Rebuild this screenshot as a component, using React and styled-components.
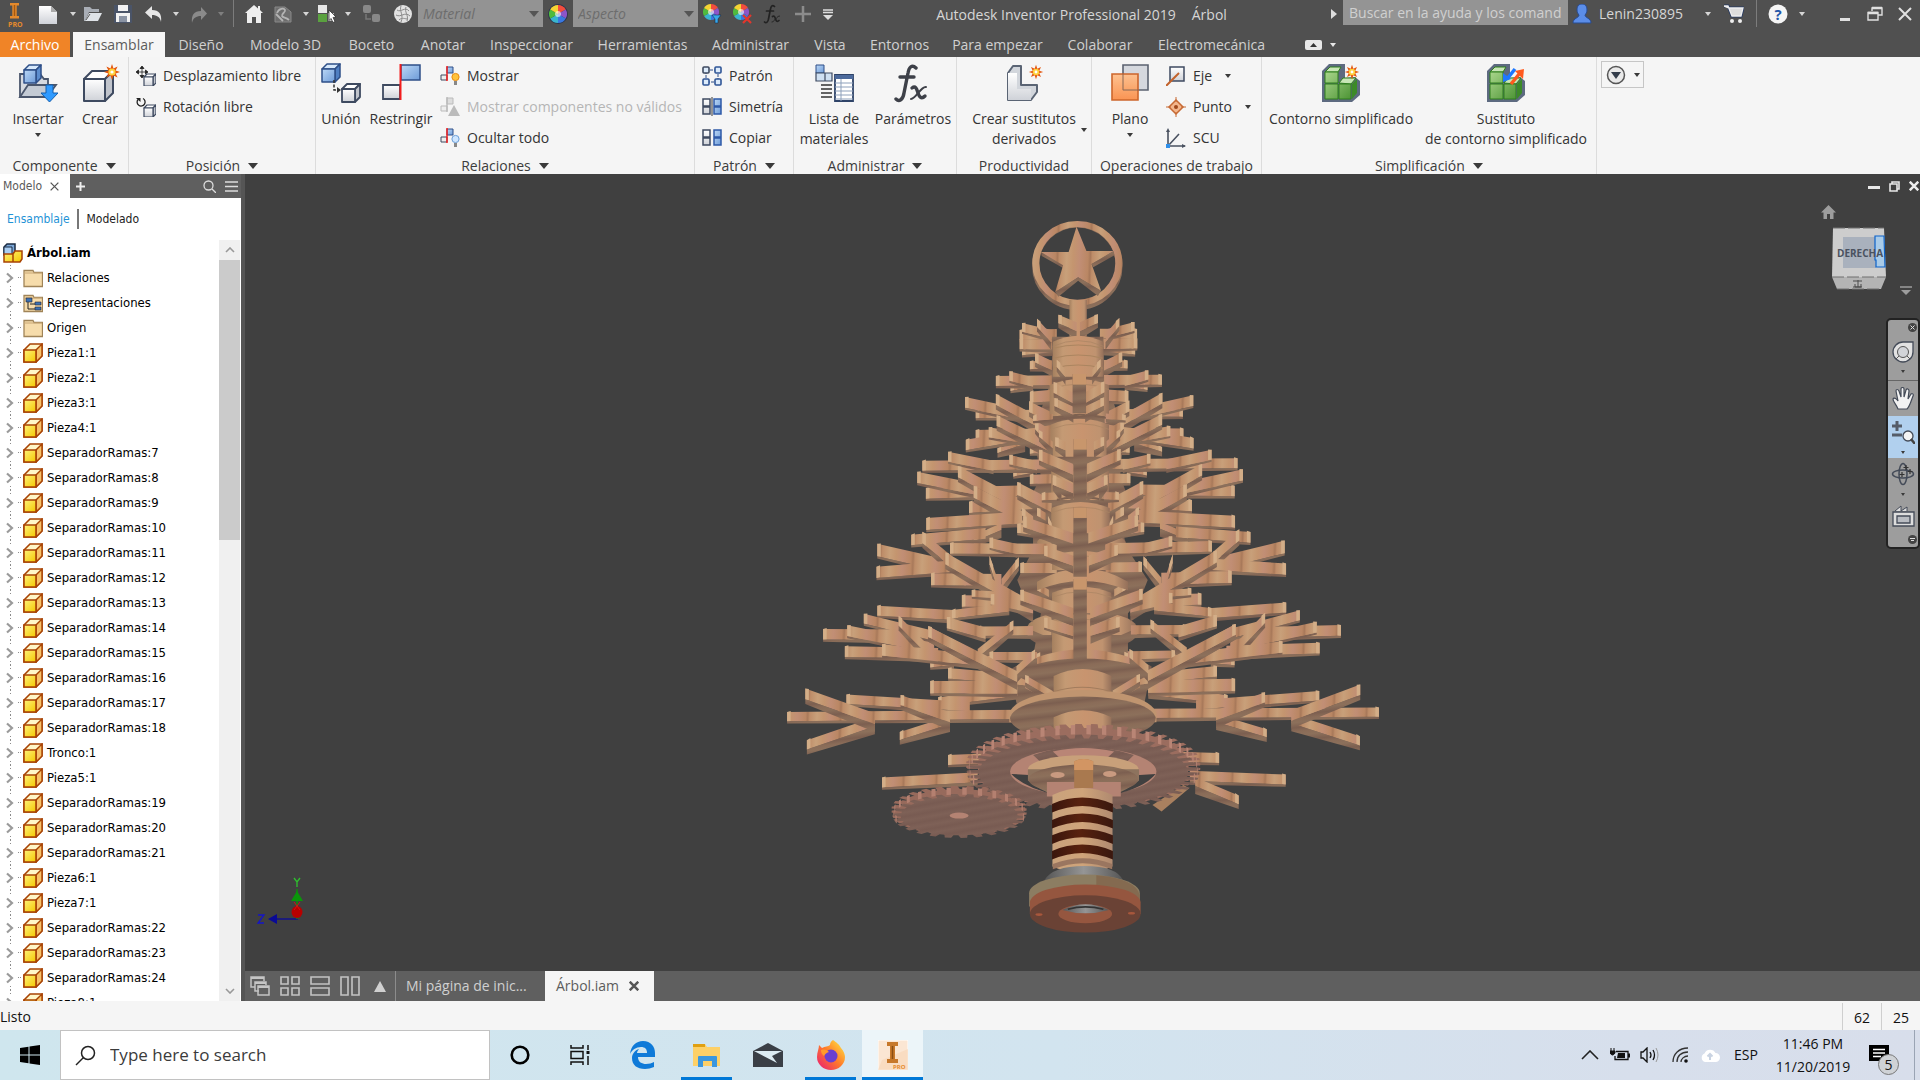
import React from "react";
import styled, { createGlobalStyle } from "styled-components";

const ui = `"Open Sans", "Noto Sans", sans-serif`;
const browserFont = `"DejaVu Sans Condensed", "Noto Sans", "Open Sans", sans-serif`;

const Global = createGlobalStyle`
  *, *::before, *::after { box-sizing: border-box; }
  body { margin: 0; overflow: hidden; font-family: ${ui}; font-size: 14px; line-height: 20px; color: #333; }
  button, input, select { font: inherit; color: inherit; }
  button { border: 0; padding: 0; background: none; }
  ul { list-style: none; margin: 0; padding: 0; }
  svg { display: block; flex: none; }
`;

/* ---------- shell ---------- */

const Window = styled.div`
  display: flex;
  flex-direction: column;
  height: 100vh;
  background: #f5f5f5;
`;

const TitleBar = styled.header`
  display: flex;
  align-items: flex-start;
  height: 32px;
  background: #505050;
  color: #d6d6d6;
`;

const ToolSlot = styled.button`
  display: flex;
  flex: none;
  align-items: center;
  justify-content: center;
  width: ${(p) => p.$w}px;
  height: 27px;
  opacity: ${(p) => (p.$dim ? 0.35 : 1)};
`;

const Rule = styled.span`
  flex: none;
  width: 1px;
  height: 27px;
  margin: 0 ${(p) => p.$gap}px;
  background: #7c7c7c;
`;

const Caret = styled.span`
  display: block;
  flex: none;
  width: 0;
  height: 0;
  border: ${(p) => p.$s || 3}px solid transparent;
  border-top-color: ${(p) => p.$c || "#3a3a3a"};
  border-top-width: ${(p) => (p.$s || 3) + 1}px;
  border-bottom: 0;
`;

const ComboWrap = styled.label`
  display: flex;
  position: relative;
  align-items: center;
  width: 125px;
  height: 27px;
  background: #939393;
`;

const Combo = styled.select`
  flex: 1;
  width: 100%;
  height: 27px;
  padding: 0 5px;
  border: 0;
  appearance: none;
  background: transparent;
  color: #6d6d6d;
  font-style: italic;
`;

const ComboCaret = styled(Caret)`
  position: absolute;
  right: 4px;
`;

const Title = styled.h1`
  display: flex;
  flex: 1;
  justify-content: center;
  gap: 16px;
  margin: 0;
  padding-top: 5px;
  font-size: 14px;
  font-weight: 400;
  line-height: 20px;
  white-space: nowrap;
`;

const HelpSearch = styled.input`
  width: 225px;
  height: 25px;
  padding: 0 6px;
  border: 0;
  background: #949494;
  &::placeholder { color: #d0d0d0; opacity: 1; }
`;

const UserName = styled.span`
  width: 104px;
  padding: 4px 0 0 3px;
`;

const WindowButtons = styled.div`
  display: flex;
  margin-left: 21px;
`;

const Tabs = styled.nav`
  display: flex;
  align-items: stretch;
  height: 25px;
  background: #505050;
`;

const Tab = styled.button`
  width: ${(p) => p.$w}px;
  margin-right: ${(p) => (p.$file ? 3 : 0)}px;
  background: ${(p) => (p.$file ? "#f08427" : p.$active ? "#f6f6f6" : "transparent")};
  color: ${(p) => (p.$file ? "#fff" : p.$active ? "#5c5c5c" : "#d0d0d0")};
  line-height: 24px;
  text-align: center;
  white-space: nowrap;
`;

const RibbonToggle = styled.button`
  display: flex;
  align-items: center;
  gap: 8px;
  margin-left: 28px;
`;

/* ---------- ribbon ---------- */

const Ribbon = styled.section`
  display: flex;
  height: 117px;
  background: #f5f5f5;
`;

const Group = styled.div`
  display: flex;
  flex: none;
  flex-direction: column;
  width: ${(p) => p.$w}px;
  border-right: 1px solid #dcdcdc;
`;

const GroupBody = styled.div`
  display: flex;
  flex: 1;
  padding-left: ${(p) => p.$pad || 0}px;
`;

const GroupName = styled.div`
  display: flex;
  align-items: center;
  justify-content: center;
  gap: 8px;
  height: 20px;
  margin-bottom: -2px;
  color: #3c3c3c;
  white-space: nowrap;
`;

const BigButton = styled.button`
  display: flex;
  flex: none;
  flex-direction: column;
  align-items: center;
  width: ${(p) => p.$w}px;
  padding-top: 6px;
  white-space: pre;
  svg { margin-bottom: 6px; }
  ${Caret} { margin-top: 4px; }
`;

const SplitButton = styled.div`
  display: flex;
  align-items: flex-end;
  height: 79px;
  ${Caret} { margin-bottom: 4px; }
`;

const Stack = styled.div`
  display: flex;
  flex-direction: column;
  padding: 3px 0 0 ${(p) => p.$pad || 0}px;
`;

const SmallButton = styled.button`
  display: flex;
  align-items: center;
  gap: 7px;
  height: 31px;
  color: ${(p) => (p.disabled ? "#b5b5b5" : "#333")};
  white-space: nowrap;
  ${Caret} { margin-left: 6px; }
`;

const PanelMenu = styled.button`
  display: flex;
  align-items: center;
  justify-content: center;
  gap: 8px;
  width: 43px;
  height: 27px;
  margin: 4px;
  border: 1px solid #c6c6c6;
`;

/* ---------- browser panel ---------- */

const Main = styled.main`
  display: flex;
  flex: 1;
  min-height: 0;
`;

const Browser = styled.aside`
  display: flex;
  flex: none;
  flex-direction: column;
  width: 245px;
  border-right: 4px solid #555;
  background: #fff;
  color: #000;
  font-family: ${browserFont};
  font-size: 13px;
`;

const BrowserTabs = styled.div`
  display: flex;
  align-items: center;
  height: 24px;
  background: #5f5f5f;
`;

const BrowserTab = styled.button`
  display: flex;
  align-items: center;
  gap: 8px;
  width: 70px;
  height: 24px;
  padding-left: 3px;
  background: #fff;
  color: #5a5a5a;
  font-size: 12px;
`;

const IconButton = styled.button`
  display: flex;
  align-items: center;
  justify-content: center;
  width: ${(p) => (p.$push ? 24 : 20)}px;
  height: 24px;
  margin-left: ${(p) => (p.$push ? "auto" : "0")};
`;

const Modes = styled.div`
  display: flex;
  align-items: center;
  height: 42px;
  padding-left: 7px;
`;

const Mode = styled.button`
  padding: 0 7px 0 0;
  color: ${(p) => (p.$active ? "#1f93d6" : "#222")};
  font-size: 12px;
  & + & { padding-left: 8px; border-left: 2px solid #777; }
`;

const TreeArea = styled.div`
  display: flex;
  flex: 1;
  min-height: 0;
`;

const Tree = styled.ul`
  flex: 1;
  overflow: hidden;
`;

const RootRow = styled.li`
  display: flex;
  align-items: center;
  gap: 4px;
  height: 25px;
  padding-left: 3px;
  font-weight: 700;
`;

const Row = styled.li`
  display: flex;
  align-items: center;
  height: 25px;
  background: repeating-linear-gradient(#8c8c8c 0 1px, transparent 1px 3px) 10px 0 / 1px 100% no-repeat;
`;

const Expander = styled.button`
  display: flex;
  flex: none;
  align-items: center;
  justify-content: flex-end;
  width: 14px;
  height: 15px;
  margin-right: 4px;
  background: #fff;
`;

const Dash = styled.span`
  flex: none;
  width: 3px;
  margin-right: 2px;
  border-top: 1px dotted #8c8c8c;
`;

const RowText = styled.span`
  margin-left: 4px;
`;

const ScrollBar = styled.div`
  display: flex;
  flex-direction: column;
  justify-content: space-between;
  width: 21px;
  margin-right: 1px;
  background: #f0f0f0;
`;

const ScrollThumb = styled.div`
  height: 280px;
  margin-bottom: auto;
  background: #cbcbcb;
`;

const ScrollArrow = styled.button`
  display: flex;
  flex: none;
  align-items: center;
  justify-content: center;
  height: 20px;
`;

/* ---------- canvas ---------- */

const Work = styled.section`
  display: flex;
  flex: 1;
  flex-direction: column;
  min-width: 0;
`;

const Canvas = styled.div`
  display: flex;
  flex: 1;
  position: relative;
  align-items: flex-start;
  justify-content: center;
  min-height: 0;
  padding-top: 41px;
  background: #404040;
`;

const Overlay = styled.div`
  position: absolute;
  top: ${(p) => p.$top}px;
  right: ${(p) => p.$right}px;
`;

const AxisMark = styled.div`
  position: absolute;
  left: 10px;
  bottom: 45px;
`;

const DocButtons = styled(Overlay)`
  display: flex;
  align-items: center;
  gap: 9px;
`;

const NavBar = styled.div`
  display: flex;
  position: absolute;
  top: 144px;
  right: 0;
  flex-direction: column;
  align-items: stretch;
  width: 34px;
  height: 231px;
  border: 2px solid #222;
  border-radius: 5px;
  background: #9d9d9d;
`;

const NavButton = styled.button`
  display: flex;
  flex-direction: column;
  align-items: ${(p) => (p.$corner ? "flex-end" : "center")};
  justify-content: center;
  gap: 7px;
  height: ${(p) => p.$h}px;
  margin-right: ${(p) => (p.$corner ? 1 : 0)}px;
  border-bottom: ${(p) => (p.$line ? "1px solid #666" : "0")};
  background: ${(p) => (p.$on ? "#b1d0ee" : "transparent")};
`;

const DocBar = styled.div`
  display: flex;
  flex: none;
  align-items: center;
  height: 30px;
  background: #5f5f5f;
`;

const LayoutButton = styled.button`
  display: flex;
  justify-content: center;
  width: 30px;
`;

const DocTab = styled.button`
  display: flex;
  align-items: center;
  gap: 10px;
  width: ${(p) => p.$w}px;
  height: 30px;
  padding: 0 10px;
  border-left: 1px solid ${(p) => (p.$active ? "#f5f5f5" : "#8c8c8c")};
  background: ${(p) => (p.$active ? "#f5f5f5" : "transparent")};
  color: ${(p) => (p.$active ? "#5c5c5c" : "#d0d0d0")};
  white-space: nowrap;
`;

const StatusBar = styled.footer`
  display: flex;
  flex: none;
  height: 29px;
  line-height: 32px;
  color: #111;
`;

const StatusText = styled.span`
  flex: 1;
`;

const StatusCell = styled.span`
  width: 39px;
  margin-top: 2px;
  border-left: 1px solid #cfcfcf;
  line-height: 29px;
  text-align: center;
`;

/* ---------- task bar ---------- */

const TaskBar = styled.div`
  display: flex;
  flex: none;
  height: 50px;
  background: linear-gradient(90deg, #cfe6ee, #d2e4ef 55%, #d7dfec 85%, #d8deeb);
  color: #111;
`;

const TaskButton = styled.button`
  display: flex;
  flex: none;
  align-items: center;
  justify-content: center;
  width: ${(p) => p.$w}px;
  margin-right: ${(p) => p.$after || 0}px;
  border-top: 3px solid transparent;
  border-bottom: 3px solid ${(p) => (p.$open ? "#0078d7" : "transparent")};
  background: ${(p) => (p.$active ? "#ecf5f9" : "transparent")};
`;

const TaskSearch = styled.label`
  display: flex;
  align-items: center;
  gap: 12px;
  width: 430px;
  margin-right: 6px;
  padding-left: 14px;
  border: 1px solid #c2c2c2;
  background: #fff;
`;

const TaskInput = styled.input`
  flex: 1;
  min-width: 0;
  border: 0;
  font-size: 17px;
  line-height: 24px;
  &::placeholder { color: #3b3b3b; opacity: 1; }
`;

const Tray = styled.div`
  display: flex;
  align-items: center;
  margin-left: auto;
`;

const TrayItem = styled.button`
  display: flex;
  align-items: center;
  justify-content: center;
  width: ${(p) => p.$w || 30}px;
`;

const Clock = styled.time`
  width: 92px;
  line-height: 23px;
  text-align: center;
`;

const Notice = styled.button`
  display: flex;
  position: relative;
  align-items: flex-start;
  width: 34px;
  height: 50px;
  margin: 0 15px 0 6px;
  padding: 15px 0 0 4px;
`;

const Badge = styled.span`
  position: absolute;
  left: 13px;
  bottom: 5px;
  width: 21px;
  height: 21px;
  border: 1px solid #777;
  border-radius: 50%;
  background: #cfd2d6;
  line-height: 19px;
  text-align: center;
`;

const ShowDesktop = styled.span`
  width: 6px;
  height: 50px;
  border-left: 1px solid #9aa4b4;
`;

/* ---------- icons ---------- */

const Svg = ({ w = 20, h = w, vb, children, ...r }) => (
  <svg width={w} height={h} viewBox={vb || `0 0 ${w} ${h}`} fill="none" aria-hidden="true" {...r}>{children}</svg>
);

const HiddenSvg = styled.svg`
  position: absolute;
`;

const Defs = () => (
  <HiddenSvg width="0" height="0" aria-hidden="true">
    <defs>
      <linearGradient id="blue" x2="1" y2="1"><stop stopColor="#bcd8f6" /><stop offset="1" stopColor="#6d9bd8" /></linearGradient>
      <linearGradient id="grey" x2="0" y2="1"><stop stopColor="#fff" /><stop offset="1" stopColor="#cfd2d8" /></linearGradient>
      <linearGradient id="green" x2="1" y2="1"><stop stopColor="#a9d68b" /><stop offset="1" stopColor="#4d9435" /></linearGradient>
      <linearGradient id="orange" x2="0" y2="1"><stop stopColor="#ffc08c" /><stop offset="1" stopColor="#fb8f4b" /></linearGradient>
      <linearGradient id="yellow" x2="1" y2="1"><stop stopColor="#fff27a" /><stop offset="1" stopColor="#f3c800" /></linearGradient>
      <linearGradient id="fox" x1="1" x2="0" y2="1"><stop stopColor="#fff044" /><stop offset=".5" stopColor="#ff7a2a" /><stop offset="1" stopColor="#e8157a" /></linearGradient>
      <linearGradient id="wood" gradientUnits="userSpaceOnUse" x1="0" y1="0" x2="83" y2="3" spreadMethod="repeat">
        <stop stopColor="#c4956f" /><stop offset=".2" stopColor="#c18e75" /><stop offset=".45" stopColor="#ba8764" /><stop offset=".52" stopColor="#a8795a" /><stop offset=".58" stopColor="#be8d69" /><stop offset=".8" stopColor="#c8a07a" /><stop offset="1" stopColor="#c4956f" />
      </linearGradient>
      <linearGradient id="drum"><stop stopColor="#a5805f" /><stop offset=".2" stopColor="#c49a74" /><stop offset=".55" stopColor="#c8946f" /><stop offset=".85" stopColor="#bf9370" /><stop offset="1" stopColor="#94705a" /></linearGradient>
      <linearGradient id="under" gradientUnits="userSpaceOnUse" x1="0" y1="0" x2="5" y2="38" spreadMethod="repeat">
        <stop stopColor="#8c705b" /><stop offset=".4" stopColor="#7c5f50" /><stop offset=".7" stopColor="#8a6c58" /><stop offset="1" stopColor="#8c705b" />
      </linearGradient>
      <linearGradient id="face" gradientUnits="userSpaceOnUse" x1="0" y1="0" x2="5" y2="24" spreadMethod="repeat">
        <stop stopColor="#7e6157" /><stop offset=".5" stopColor="#785b52" /><stop offset="1" stopColor="#7e6157" />
      </linearGradient>
      <linearGradient id="spool"><stop stopColor="#c9a27c" /><stop offset=".5" stopColor="#cfa47a" /><stop offset="1" stopColor="#b08a70" /></linearGradient>
      <linearGradient id="coil"><stop stopColor="#3a160d" /><stop offset=".45" stopColor="#58220f" /><stop offset="1" stopColor="#3a180f" /></linearGradient>
      <linearGradient id="steel"><stop stopColor="#555" /><stop offset=".5" stopColor="#959595" /><stop offset="1" stopColor="#555" /></linearGradient>
    </defs>
  </HiddenSvg>
);

const Spark = ({ x, y, s = 1 }) => (
  <g transform={`translate(${x} ${y}) scale(${s})`}>
    <path d="M0-8 1.5-3.6 5.6-5.6 3.6-1.5 8 0 3.6 1.5 5.6 5.6 1.5 3.6 0 8-1.5 3.6-5.6 5.6-3.6 1.5-8 0-3.6-1.5-5.6-5.6-1.5-3.6Z" fill="#e4550c" />
    <circle r="3.6" fill="#ffd23c" /><circle r="1.6" fill="#fff" />
  </g>
);

const Box = ({ x, y, w, h, d = 5, fill = "url(#grey)", top = "#fff", side = "#c0c4cc", stroke = "#3e4a60", sw = 1.5 }) => (
  <g transform={`translate(${x} ${y})`} stroke={stroke} strokeWidth={sw} strokeLinejoin="round">
    <path d={`M0 ${d} ${d} 0H${w}L${w - d} ${d}Z`} fill={top} />
    <path d={`M${w - d} ${d} ${w} 0V${h - d}L${w - d} ${h}Z`} fill={side} />
    <path d={`M0 ${d}H${w - d}V${h}H0Z`} fill={fill} />
  </g>
);

const IconPro = () => (
  <Svg w={20} h={27}><path d="M5 3h9v2.600h-2.300V16H14v2.600H5V16h2.300V5.600H5Z" fill="#e58a2c" /><path d="M9.500 5v11" stroke="#a8590f" strokeWidth="1.500" /><text x="3" y="26.500" fontSize="7" fontWeight="700" fontFamily="Open Sans, sans-serif" fill="#e58a2c">PRO</text></Svg>
);
const IconNew = () => <Svg><path d="M1 2h12l6 6v12H1Z" fill="url(#grey)" /><path d="M13 2v6h6Z" fill="#aaa" /></Svg>;
const IconOpen = () => <Svg><path d="M1 3h6l2 2h7v3H6L2 17H1Z" fill="#a9aeb6" /><path d="M6 9h13l-4 8H2Z" fill="#dfe3e8" /><path d="m3 16 4-6" stroke="#555" /></Svg>;
const IconSave = () => <Svg><path d="M1 1h18v18H1Z" fill="#4a5468" /><path d="M5 1h10v6H5ZM3 9h14v9H3Z" fill="#f2f2f2" /><path d="M6 12h8v6H6Z" fill="#8a93a3" /></Svg>;
const IconUndo = () => <Svg><path d="M8 2v4c7 0 10 4 9 12-1-5-4-7-9-7v4L1 8.500Z" fill="#e6e6e6" /></Svg>;
const IconRedo = () => <Svg w={18}><path d="M11 2v4C4 6 1 10 2 18c1-5 4-7 9-7v4l6-6.500Z" fill="#8a8a8a" /></Svg>;
const IconHome = () => <Svg><path d="M10 1 1 9h2v10h5v-6h4v6h5V9h2l-3-3V2h-2v2.500Z" fill="#eee" /></Svg>;
const IconSketch = () => <Svg><path d="M2 3h10l6 5v10H2Z" fill="#6e6e6e" stroke="#888" /><path d="M4 9c2-5 7-5 8-3s-4 4-3 6 4 1 7 4M3 10l7 7" stroke="#b4b4b4" strokeWidth="1.800" /></Svg>;
const IconSelect = () => <Svg><path d="M1 1h9v8H1Z" fill="#e7e7e7" /><path d="M1 10h9v8H1Z" fill="#5aa13f" /><path d="M11 9h6v8h-6Z" fill="#bbb" /><path d="m12 6 7 7-3 .5 2 4-2 1-2-4-2 2Z" fill="#fff" stroke="#333" strokeWidth=".8" /></Svg>;
const IconAdjust = () => <Svg><rect x="2" y="1" width="8" height="8" rx="2" fill="#888" /><rect x="11" y="10" width="8" height="8" rx="2" fill="#888" /><path d="M5 10v5h5" stroke="#777" strokeWidth="1.500" /></Svg>;
const IconGlobe = () => <Svg><circle cx="10" cy="10" r="9" fill="#e2e2e2" /><path d="M4 6c4 3 8-4 12 1M3 11c5 3 9-4 14 1M6 16c3-3 6-1 9-1M8 2c-2 5 3 9 0 16M13 3c-2 5 3 8 1 14" stroke="#8a8a8a" /></Svg>;
const Wheel = ({ r = 9 }) => (
  <g>
    {["#f24d3d", "#8d55c9", "#3978e0", "#3ab5cf", "#4fbb3d", "#f5d433"].map((c, i) => {
      const a = (i * 60 - 90) * Math.PI / 180, b = a + Math.PI / 3;
      return <path key={c} d={`M10 10L${10 + r * Math.cos(a)} ${10 + r * Math.sin(a)}A${r} ${r} 0 0 1 ${10 + r * Math.cos(b)} ${10 + r * Math.sin(b)}Z`} fill={c} />;
    })}
    <circle cx="10" cy="10" r="3" fill="#fff" opacity=".6" />
  </g>
);
const IconWheel = () => <Svg><circle cx="10" cy="10" r="10" fill="#2b344c" /><Wheel /></Svg>;
const IconWheelFilter = () => <Svg><g transform="translate(-1 -2)"><Wheel r={8} /></g><path d="M10 11h9l-3 4v4h-3v-4Z" fill="#38a8e8" stroke="#124" strokeWidth=".5" /></Svg>;
const IconWheelX = () => <Svg><g transform="translate(-1 -2)"><Wheel r={8} /></g><path d="m11 11 8 8m0-8-8 8" stroke="#e3362c" strokeWidth="2.200" /></Svg>;
const IconFx = ({ s = 20, c = "#222" }) => (
  <Svg w={s} h={s} vb="0 0 40 40"><path d="M23 5c-4-4-7-1-8 5l-4 20c-1 7-5 9-8 6M7 14h14" stroke={c} strokeWidth="3.400" strokeLinecap="round" /><path d="M19 25c4-3 5 2 6 5s3 7 7 3" stroke={c} strokeWidth="3.400" strokeLinecap="round" /><path d="M33 24c-5-1-10 12-15 12" stroke={c} strokeWidth="2" strokeLinecap="round" /></Svg>
);
const IconPlus = () => <Svg><path d="M10 2v16M2 10h16" stroke="#8c8c8c" strokeWidth="2.500" /></Svg>;
const IconMenuDown = () => <Svg w={12} h={12}><path d="M1 2h10M1 4.500h10" stroke="#ddd" strokeWidth="1.300" /><path d="M1 7h10l-5 5Z" fill="#ddd" /></Svg>;
const IconUser = () => <Svg w={20} h={20}><path d="M10 0c4 0 5 3 5 6 0 2-1 4-2 5 0 3 6 3 6 8H1c0-5 6-5 6-8-1-1-2-3-2-5 0-3 1-6 5-6Z" fill="#5b8de8" stroke="#274a90" /></Svg>;
const IconCart = () => <Svg><path d="M0 2h4l4 10h9l2-8H5" stroke="#273a63" strokeWidth="3" /><path d="M0 2h4l4 10h9l2-8H5Z" fill="#ddd" stroke="#eee" strokeWidth="1.300" /><circle cx="8" cy="17" r="2" fill="#eee" /><circle cx="16" cy="17" r="2" fill="#eee" /></Svg>;
const IconHelp = () => <Svg><circle cx="10" cy="10" r="9.500" fill="#f5f5f5" /><text x="10" y="15.500" textAnchor="middle" fontSize="15" fontWeight="700" fontFamily="Open Sans, sans-serif" fill="#2456a8">?</text></Svg>;
const IconMin = () => <Svg w={12} h={16}><path d="M1 12h10v3H1Z" fill="#e0e0e0" /></Svg>;
const IconRestore = () => <Svg w={16} h={16}><path d="M5 5V2h10v7h-4M1 6.500h10V14H1Z" stroke="#e0e0e0" strokeWidth="1.400" /><path d="M5 2h10M1 7h10" stroke="#e0e0e0" strokeWidth="2.500" /></Svg>;
const IconClose = ({ s = 14, c = "#e0e0e0", w = 2 }) => <Svg w={s} h={s} vb="0 0 14 14"><path d="m1 1 12 12M13 1 1 13" stroke={c} strokeWidth={w} /></Svg>;

const IconInsert = () => (
  <Svg w={40}><path d="M2 11h20l4 5h4v6L26 34H2Z" fill="#d5d9e0" stroke="#4a566c" strokeWidth="1.800" /><path d="M10 22h28l-9 12H2Z" fill="#c3cad4" stroke="#4a566c" strokeWidth="1.800" /><Box x={6} y={2} w={17} h={18} fill="url(#blue)" top="#d6e8fb" side="#5c8dce" stroke="#2e4f88" /><path d="M28 22h7v8h5l-8.500 9L23 30h5Z" fill="#2f9aff" stroke="#155fae" /></Svg>
);
const IconCreate = () => <Svg w={40}><Box x={4} y={8} w={29} h={30} d={8} sw={2} /><Spark x={32} y={9} /></Svg>;
const IconMove = () => <Svg><path d="M6 0 4 2.500h4ZM6 12 4 9.500h4ZM0 6l2.500-2v4ZM12 6 9.500 4v4ZM6 2v8M2 6h8" fill="#222" stroke="#222" strokeWidth=".8" /><Box x={8} y={8} w={12} h={12} d={3} sw={1.200} /></Svg>;
const IconRotate = () => <Svg><path d="M7 1.500A4 4 0 1 1 2 2.500" stroke="#222" strokeWidth="1.300" /><path d="M0 1h4.500v4Z" fill="#222" /><Box x={8} y={8} w={12} h={12} d={3} sw={1.200} /></Svg>;
const IconJoint = () => <Svg w={40}><Box x={1} y={1} w={18} h={18} fill="url(#blue)" top="#d6e8fb" side="#4f7fc2" stroke="#2e4f88" /><Box x={21} y={21} w={18} h={18} sw={1.800} /><path d="M13 17v10h4" stroke="#333" strokeWidth="1.500" strokeDasharray="3 1.500" /><path d="m16 24 4 3-4 3Z" fill="#333" /></Svg>;
const IconConstrain = () => <Svg w={40}><path d="M20 2h19v15H20Z" fill="url(#blue)" stroke="#2e4f88" strokeWidth="1.500" /><path d="M2 22h17v14H2Z" fill="url(#grey)" stroke="#3e4a60" strokeWidth="1.800" /><path d="M19.500 1v36" stroke="#f21d1d" strokeWidth="2" /></Svg>;
const IconRel = ({ bulb }) => {
  const off = bulb === "off";
  return (
    <Svg><path d="M7 1h6v6H7Z" fill={off ? "#ddd" : "url(#blue)"} stroke={off ? "#bbb" : "#2e4f88"} /><path d="M1 9h6v5H1Z" fill="#eee" stroke={off ? "#bbb" : "#3e4a60"} /><path d="M7 0v15" stroke={off ? "#bbb" : "#f21d1d"} strokeWidth="1.500" />
      {off ? <path d="m14 8 6 11H8Z" fill="#bbb" /> : <g><circle cx="15.500" cy="11" r="3.600" fill={bulb === "on" ? "#ffc23c" : "#cfe6ff"} stroke={bulb === "on" ? "#e88a10" : "#6a9ed8"} /><path d="M14 15h3v4h-3Z" fill="#888" /></g>}
    </Svg>
  );
};
const IconPattern = () => <Svg><path d="M4 4h12v12H4Z" stroke="#2e4f88" strokeDasharray="3 1" /><g fill="#dcebfb" stroke="#2f5596" strokeWidth="1.600"><rect x="1" y="1" width="6" height="6" rx="1" stroke="#3e4a60" /><rect x="13" y="1" width="6" height="6" rx="1" /><rect x="1" y="13" width="6" height="6" rx="1" /><rect x="13" y="13" width="6" height="6" rx="1" /></g></Svg>;
const IconMirror = ({ copy }) => <Svg><path d="M1 2h7v7H1ZM1 10h7v7H1Z" fill="url(#grey)" stroke="#3e4a60" strokeWidth="1.500" /><path d="M12 2h7v7h-7ZM12 10h7v7h-7Z" fill="url(#blue)" stroke="#2e5aa8" strokeWidth="1.500" />{!copy && <path d="M10 0v19" stroke="#333" />}</Svg>;
const IconBom = () => (
  <Svg w={40}><path d="M2 2h8v8H2Z" fill="url(#blue)" stroke="#2e4f88" /><path d="M2 10h9v8H2ZM11 10h7v8h-7Z" fill="#cfe0f2" stroke="#3e4a60" strokeWidth="1.200" /><path d="M7 22h11M7 26h11M7 30h11M7 34h11" stroke="#333" strokeWidth="1.500" /><path d="M21 12h18v26H21Z" fill="#fff" stroke="#2e4368" strokeWidth="1.800" /><path d="M21 12h18v4H21Z" fill="#4c6a9c" /><path d="M21 20h18M21 24h18M21 28h18M21 32h18M21 36h18M27 16v22" stroke="#8da0bb" /></Svg>
);
const IconDerive = () => <Svg w={40}><path d="m4 10 5-7h8v19h16v7l-6 8H4Z" fill="#d2d6dc" stroke="#5a6474" strokeWidth="2" strokeLinejoin="round" /><path d="M4 10h9v16h14v11H4Z" fill="url(#grey)" /><Spark x={32} y={9} s={0.900} /></Svg>;
const IconPlane = () => <Svg w={40}><path d="M13 2h25v25H13Z" fill="#d5d8de" stroke="#5b6270" strokeWidth="1.600" /><path d="M2 11h26v26H2Z" fill="url(#orange)" stroke="#cc5f22" strokeWidth="1.600" opacity=".95" /><path d="M13 11v16h15" stroke="#8a6a58" /></Svg>;
const IconAxis = () => <Svg><path d="M4 1h14v14H4Z" fill="url(#grey)" stroke="#3e4a60" strokeWidth="1.500" /><path d="M0 20 13 7" stroke="#c2622c" strokeWidth="2" /></Svg>;
const IconPoint = () => <Svg><path d="m10 3 7 7-7 7-7-7Z" fill="#f3b68c" stroke="#c76a34" strokeWidth="1.500" /><path d="M10 0v5M10 15v5M0 10h5M15 10h5" stroke="#c76a34" /><circle cx="10" cy="10" r="2" fill="#a0481c" /></Svg>;
const IconUcs = () => <Svg><path d="M2 2v16h17M2 18 13 6" stroke="#4a5260" strokeWidth="1.600" /><path d="M0 16h4v4H0Z" fill="#2f8fe8" /><path d="M0 4 2 0l2 4ZM16 16l4 2-4 2Z" fill="#4a5260" /></Svg>;
const IconShrink = ({ swap }) => (
  <Svg w={40}><path d="m1 8 7-7h16v14l10-1 5 4v14l-8 7H1Z" fill="#5d6a80" /><path d="m4 9 5-5h11l-3 5ZM18 20l4-5h13l-5 6Z" fill="#c8e6b6" stroke="#2f7f1c" /><path d="M4 9h13v11H4ZM4 21h13v15H4ZM18 21h12v15H18Z" fill="url(#green)" stroke="#2f7f1c" /><path d="m31 21 5-5v14l-5 6Z" fill="#3c8a28" />
    {swap ? <g strokeWidth="3.500"><path d="m29 6-8 10" stroke="#1e78ff" /><path d="M17 10v9l8-3Z" fill="#1e78ff" /><path d="m25 21 9-11" stroke="#ff5a1e" /><path d="m29 8 9-2-1 10Z" fill="#ff5a1e" /></g> : <Spark x={31} y={9} s={0.900} />}
  </Svg>
);

const IconPart = () => <Svg><path d="M1 7 7 1h12v12l-6 6H1Z" fill="#fff6c8" stroke="#a84304" strokeWidth="1.600" /><path d="M13 7l6-6v12l-6 6Z" fill="#f7c36a" stroke="#a84304" strokeWidth="1.400" /><path d="M1 7h12v12H1Z" fill="url(#yellow)" stroke="#a84304" strokeWidth="1.600" /></Svg>;
const IconFolder = ({ rep }) => <Svg><path d="M1 2.500h9l1 2h8.500v14H1Z" fill="#f6dcab" stroke="#a08458" strokeWidth="1.300" /><path d="M1 5h18" stroke="#c7a676" />{rep && <g><path d="M5 8v8h8M7 11h6" stroke="#222" /><path d="M3 5h6v4H3ZM12 9h6v3h-6ZM12 14h6v3h-6Z" fill="#3c72b4" stroke="#223" strokeWidth=".6" /></g>}</Svg>;
const IconAssembly = () => <Svg><path d="M1 4 4 1h8v8l-3 3H1Z" fill="#7ba7d8" stroke="#1b2c44" strokeWidth="1.500" /><path d="M1 4h8v8H1Z" fill="#a9cdf2" stroke="#1b2c44" /><path d="M1 11h9v8H1ZM10 11l2-3h7v8l-2 3h-7Z" fill="url(#yellow)" stroke="#a84304" strokeWidth="1.500" /></Svg>;

/* ---------- the assembly ---------- */

const backBeams = [
  [606, 405, 700, 402, 30], [612, 382, 690, 404, 26], [612, 458, 700, 448, 16], [606, 433, 700, 433, 30], [650, 368, 686, 415, 24],
  [704, 357, 750, 380, 26], [632, 496, 710, 492, 24], [645, 473, 730, 520, 28],
  [583, 567, 640, 555, 12], [546, 543, 700, 541, 30], [580, 528, 640, 546, 28],
  [632, 592, 700, 585, 34], [495, 644, 650, 640, 22], [468, 607, 620, 645, 32], [546, 598, 690, 690, 32], [630, 620, 700, 660, 32],
  [495, 705, 680, 700, 30], [550, 752, 620, 725, 14], [470, 735, 690, 690, 32], [528, 697, 660, 722, 30], [632, 745, 700, 740, 32], [548, 662, 700, 748, 32], [645, 670, 690, 730, 34],
  [590, 824, 640, 812, 12], [360, 797, 700, 793, 30], [425, 770, 540, 797, 30], [580, 779, 650, 797, 28], [632, 838, 700, 836, 28],
  [369, 880, 610, 872, 32], [347, 832, 490, 866, 34], [450, 815, 610, 915, 34], [478, 922, 640, 910, 34], [490, 875, 640, 968, 36], [600, 865, 690, 920, 38],
];
const midBeams = [
  [370, 972, 620, 952, 36], [490, 1015, 560, 980, 20], [332, 1020, 520, 1000, 32], [600, 985, 700, 1000, 28],
  [246, 1050, 430, 1100, 38], [430, 1045, 700, 1047, 32], [530, 1028, 600, 1047, 30], [360, 1012, 470, 1120, 34],
  [244, 1117, 440, 1098, 34], [608, 1104, 700, 1104, 30], [382, 1138, 560, 1140, 36], [530, 1080, 550, 1150, 26], [604, 1085, 560, 1150, 26], [418, 1075, 640, 1225, 36],
  [460, 1203, 640, 1205, 34], [485, 1180, 560, 1185, 20], [533, 1198, 640, 1225, 30],
  [246, 1232, 450, 1246, 30], [435, 1243, 580, 1222, 26], [212, 1256, 380, 1305, 30], [109, 1303, 340, 1305, 32], [170, 1292, 390, 1345, 32], [300, 1262, 370, 1345, 30],
  [500, 1294, 640, 1292, 28], [422, 1268, 520, 1300, 34], [380, 1396, 440, 1388, 14], [164, 1355, 400, 1360, 32], [258, 1350, 540, 1385, 34], [590, 1275, 500, 1360, 26], [375, 1295, 690, 1492, 32],
  [530, 1368, 650, 1368, 24], [658, 1370, 600, 1420, 26],
  [425, 1420, 620, 1440, 32], [400, 1505, 600, 1475, 26], [380, 1462, 600, 1462, 38],
  [168, 1498, 480, 1520, 28], [68, 1635, 240, 1565, 28], [303, 1608, 430, 1560, 24], [18, 1550, 620, 1543, 28], [64, 1482, 240, 1556, 32], [305, 1500, 430, 1552, 30],
];
const innerBeams = [
  [700, 490, 722, 520, 22], [640, 655, 690, 650, 16], [655, 700, 690, 735, 20], [696, 725, 722, 738, 26], [662, 890, 700, 888, 22],
  [612, 935, 640, 960, 22], [650, 935, 672, 950, 24], [678, 958, 690, 990, 20], [650, 1160, 680, 1180, 22], [690, 845, 712, 870, 24],
];
const lowBeams = [[425, 1680, 620, 1670, 30], [258, 1748, 500, 1732, 30]];
const frontBeams = [[692, 562, 742, 594, 32], [694, 606, 742, 632, 24], [655, 765, 742, 808, 32], [690, 840, 742, 866, 28], [615, 965, 742, 1015, 32], [668, 1052, 742, 1082, 30], [608, 1185, 742, 1240, 32], [668, 1268, 742, 1293, 30]];

const Beam = ({ b: [x1, y1, x2, y2, t] }) => {
  const k = t / 2, dir = x2 > x1 ? 1 : -1;
  const slope = (y2 - y1) / (x2 - x1 || 1);
  const sag = Math.abs(slope) > 0.35 ? 24 : 11;
  return (
    <g>
      <path d={`M${x1} ${y1 + k}L${x2} ${y2 + k}V${y2 + k + sag}L${x1} ${y1 + k + sag * 0.6}Z`} fill="url(#under)" />
      <path d={`M${x1} ${y1 - k}L${x2} ${y2 - k}V${y2 + k}L${x1} ${y1 + k}Z`} fill="url(#wood)" />
      <path d={`M${x1} ${y1 - k}l${9 * dir} ${9 * dir * slope - 3}v${t + 2}L${x1} ${y1 + k}Z`} fill="#d3ae88" />
    </g>
  );
};

const flip = ([x1, y1, x2, y2, t]) => {
  const m = (x, y) => 1511 + (y - 500) * 0.0208 - x;
  const r = (x, y) => y - Math.max(0, 760 - x) * 0.018;
  return [m(x1, y1), r(x1, y1), m(x2, y2), r(x2, y2), t];
};

const gear = (cx, cy, rx, ry, n, depth) => {
  let d = "";
  for (let i = 0; i < n; i++) {
    [[0, 1], [0.4, 1], [0.55, depth], [0.9, depth]].forEach(([o, s], j) => {
      const a = ((i + o) / n) * Math.PI * 2;
      d += `${i || j ? "L" : "M"}${(cx + rx * s * Math.cos(a)).toFixed(1)} ${(cy + ry * s * Math.sin(a)).toFixed(1)}`;
    });
  }
  return d + "Z";
};

const teethWalls = (cx, cy, rx, ry, n, h) => {
  let d = "";
  for (let i = 0; i < n; i++) {
    const a = ((i + 0.7) / n) * Math.PI * 2, b = ((i + 0.98) / n) * Math.PI * 2;
    if (Math.sin(a) > 0.35) continue;
    const x1 = cx + rx * Math.cos(a), y1 = cy + ry * Math.sin(a), x2 = cx + rx * Math.cos(b), y2 = cy + ry * Math.sin(b);
    d += `M${x1.toFixed(1)} ${y1.toFixed(1)}L${x2.toFixed(1)} ${y2.toFixed(1)}v${h}L${x1.toFixed(1)} ${(y1 + h).toFixed(1)}Z`;
  }
  return d;
};

const Layer = ({ list }) => list.map((b, i) => <g key={i}><Beam b={b} /><Beam b={flip(b)} /></g>);

const TreeModel = () => (
  <svg width="620" height="740" viewBox="773 215 620 740" role="img" aria-label="Árbol">
    <g transform="translate(780 200) scale(.3954 .3333)">
      <ellipse cx="752" cy="198" rx="106" ry="124" stroke="url(#under)" strokeWidth="17" fill="none" />
      <ellipse cx="752" cy="190" rx="105" ry="118" stroke="url(#wood)" strokeWidth="18" fill="none" />
      <path d="M730 156 660 156 662 168 716 204ZM696 276 754 232 812 272 804 288 754 242 704 290ZM788 192 844 153 846 166 792 202Z" fill="url(#under)" />
      <path d="M750 80 775 153H844L788 192 812 272 754 232 696 276 716 196 660 156H730Z" fill="url(#wood)" />
      <path d="M732 300h44v110h-44Z" fill="url(#drum)" />
      <path d="M700 480 680 560 640 700 660 830 630 900 600 960 640 1010 640 1050 600 1140 620 1200 660 1240 640 1370 580 1410 600 1520H920L940 1400 880 1360V1240L910 1200 930 1140 880 1050 870 1010 910 950 880 890 860 830 870 700 830 560 810 480Z" fill="url(#under)" />
      <Layer list={backBeams} />
      <ellipse cx="762" cy="1040" rx="112" ry="36" fill="url(#under)" />
      <path d="M650 1030a112 42 0 0 1 224 0l-30 18H680Z" fill="url(#drum)" />
      <ellipse cx="764" cy="1300" rx="139" ry="52" fill="url(#under)" />
      <path d="M625 1285a139 52 0 0 1 278 0l-40 20H665Z" fill="url(#drum)" />
      <path d="M688 410h130l14 1100H686Z" fill="url(#under)" />
      <Layer list={midBeams} />
      {[[690, 818, 425, 530], [682, 832, 555, 648], [684, 832, 674, 770], [686, 832, 812, 900], [686, 834, 924, 1000], [688, 836, 1070, 1110], [688, 838, 1178, 1240], [688, 838, 1260, 1370]].map(([a, b, y, e]) => (
        <g key={y}><path d={`M${a} ${y}Q${(a + b) / 2} ${y - 36} ${b} ${y}V${e}H${a}Z`} fill="url(#drum)" /><path d={`M${a} ${y + 14}Q${(a + b) / 2} ${y - 20} ${b} ${y + 14}`} stroke="#a98463" strokeWidth="2" fill="none" /></g>
      ))}
      <path d="M692 445q62-20 124 0M692 475q62-20 124 0M692 505q62-20 124 0" stroke="#ab8560" strokeWidth="3" fill="none" />
      <path d="M684 655q74-22 148 0M684 905q74-26 150 0" stroke="#7d6150" strokeWidth="6" fill="none" />
      <Layer list={innerBeams} />
      <path d="M650 1145q60-40 115-40t115 40v26q-60-28-115-28t-115 28Z" fill="url(#drum)" />
      <Layer list={frontBeams} />
      <ellipse cx="764" cy="1412" rx="172" ry="50" fill="url(#under)" />
      <path d="M650 1372q60-24 115-24t120 24v20q-60-16-120-16t-115 16Z" fill="url(#wood)" />
      <path d="M692 1428q74-42 146 0v62H692Z" fill="url(#drum)" />
      <path d="M690 1476q74-28 150 0" stroke="#a27c5d" strokeWidth="3" fill="none" />
      <Layer list={[[620, 1436, 690, 1484, 22], [645, 1362, 598, 1412, 26]]} />
      <Layer list={[[375, 1295, 600, 1430, 32]]} />
      {[[740, 522, 640], [742, 717, 905], [742, 922, 1130], [742, 1137, 1378]].map(([x, y, e]) => (
        <g key={y}><path d={`M${x} ${y}h34V${e}h-34Z`} fill="url(#under)" /><path d={`M${x} ${y}h34v32h-34Z`} fill="#c8966c" /></g>
      ))}
      <path d="M580 1545a186 75 0 0 1 372 0v22H580Z" fill="#c09570" />
      <ellipse cx="766" cy="1556" rx="184" ry="66" fill="url(#under)" />
      <path d="M692 1552q74-42 146 0v60H692Z" fill="url(#drum)" />

      <Layer list={lowBeams} />
      <Beam b={[1160, 1800, 1050, 1745, 26]} />
      <path d="M942 1815 1020 1755 1035 1765 965 1835Z" fill="#a9805f" />
      <path d={gear(767, 1690, 296, 118, 46, 0.9)} fill="#9b6d5f" />
      <path d={gear(767, 1704, 296, 118, 46, 0.9)} fill="#9b6d5f" />
      <path d={gear(767, 1718, 294, 114, 46, 0.9)} fill="url(#face)" />
      <path d={teethWalls(767, 1692, 290, 117, 46, 28)} fill="#b98575" />
      <ellipse cx="767" cy="1715" rx="185" ry="72" fill="#b48373" />
      <path d="M640 1665q54-24 125-24t130 24l-22 26q-50-16-106-16t-104 16Z" fill="url(#face)" />
      <path d="M690 1655q76-22 155 0l-22 24H712Z" fill="#b98576" />
      <path d="M585 1722 640 1726V1740L700 1785Q620 1765 585 1722ZM950 1722 900 1726V1740L840 1785Q920 1765 950 1722Z" fill="#404040" />
      <path d="M600 1760q60 40 167 40t165-43l-32 54-130 14-120-16Z" fill="url(#face)" />
      <ellipse cx="767" cy="1708" rx="140" ry="42" fill="#c8a07a" />
      <path d="M627 1708h281v34q-60 58-140 58t-141-58Z" fill="#8d735e" />
      <ellipse cx="767" cy="1738" rx="139" ry="44" fill="url(#under)" />
      <ellipse cx="702" cy="1725" rx="18" ry="9" fill="#c99a80" /><ellipse cx="834" cy="1722" rx="17" ry="9" fill="#c99a80" />
      <path d="M675 1746h187v44H675Z" fill="#b48373" />
      <path d="M744 1684q24-14 48 0v80h-48Z" fill="#a9794f" /><path d="M744 1684q24-14 48 0v26h-48Z" fill="#d29563" />

      <path d="M689 1785q76-42 152 0v215q-76 40-152 0Z" fill="url(#spool)" />
      {[1812, 1860, 1906, 1953].map((y) => <path key={y} d={`M688 ${y}q76-38 154 0v26q-78-40-154 0Z`} fill="url(#coil)" />)}
      <path d="M690 1992q76-34 150 0v16q-74-36-150 0Z" fill="#9a7660" />
      <path d="M668 2042q20-44 102-44t98 44Z" fill="url(#steel)" />
      <path d="M630 2080a140 56 0 0 1 280 0v40H630Z" fill="#8c7d62" /><path d="M800 2026q100 10 110 60v40l-110-60Z" fill="#846a50" />
      <path d="M632 2108a140 54 0 0 1 280 0v34H632Z" fill="#95563f" />
      <ellipse cx="772" cy="2142" rx="140" ry="56" fill="#6a4235" />
      <ellipse cx="772" cy="2142" rx="68" ry="28" fill="#95563f" />
      <path d="M714 2130q58-34 118 0-60 20-118 0Z" fill="url(#steel)" /><path d="M728 2128q44-14 90 0" stroke="#333" strokeWidth="5" fill="none" />
      <ellipse cx="655" cy="2144" rx="9" ry="4" fill="#a8573c" /><ellipse cx="889" cy="2140" rx="9" ry="4" fill="#a8573c" />

      <path d={gear(453, 1826, 171, 68, 26, 0.86)} fill="#976a5c" />
      <path d={gear(453, 1838, 171, 68, 26, 0.86)} fill="#976a5c" />
      <path d={gear(453, 1848, 168, 66, 26, 0.88)} fill="url(#face)" />
      <path d={teethWalls(453, 1828, 166, 66, 26, 22)} fill="#b48070" />
      <ellipse cx="453" cy="1847" rx="24" ry="9" fill="#b48373" />
    </g>
  </svg>
);

/* ---------- data ---------- */

const tabs = [["Archivo", 70], ["Ensamblar", 92], ["Diseño", 72], ["Modelo 3D", 97], ["Boceto", 75], ["Anotar", 68], ["Inspeccionar", 109], ["Herramientas", 113], ["Administrar", 103], ["Vista", 56], ["Entornos", 83], ["Para empezar", 113], ["Colaborar", 92], ["Electromecánica", 131]];

const parts = ["Relaciones", "Representaciones", "Origen", "Pieza1:1", "Pieza2:1", "Pieza3:1", "Pieza4:1",
  ...Array.from({ length: 12 }, (_, i) => `SeparadorRamas:${i + 7}`), "Tronco:1", "Pieza5:1", "SeparadorRamas:19", "SeparadorRamas:20", "SeparadorRamas:21",
  "Pieza6:1", "Pieza7:1", "SeparadorRamas:22", "SeparadorRamas:23", "SeparadorRamas:24", "Pieza8:1"];

const Label = ({ children, menu }) => <GroupName>{children}{menu && <Caret $s={5} />}</GroupName>;
const Drop = ({ w, dim }) => <ToolSlot $w={w} $dim={dim} aria-label="Más"><Caret $c="#d6d6d6" /></ToolSlot>;
const Tool = ({ w, name, dim, children }) => <ToolSlot $w={w} $dim={dim} aria-label={name}>{children}</ToolSlot>;

export default function App() {
  return (
    <Window>
      <Global />
      <Defs />
      <TitleBar>
        <Tool w={30} name="Inventor"><IconPro /></Tool>
        <Tool w={36} name="Nuevo"><IconNew /></Tool><Drop w={13} />
        <Tool w={28} name="Abrir"><IconOpen /></Tool>
        <Tool w={32} name="Guardar"><IconSave /></Tool>
        <Tool w={30} name="Deshacer"><IconUndo /></Tool><Drop w={14} />
        <Tool w={32} name="Rehacer"><IconRedo /></Tool><Drop w={12} dim />
        <Rule $gap={6} />
        <Tool w={27} name="Inicio"><IconHome /></Tool>
        <Tool w={32} name="Boceto"><IconSketch /></Tool><Drop w={14} />
        <Tool w={28} name="Seleccionar"><IconSelect /></Tool><Drop w={14} />
        <Tool w={32} name="Ajustar"><IconAdjust /></Tool>
        <Tool w={31} name="Materiales"><IconGlobe /></Tool>
        <ComboWrap><Combo aria-label="Material" defaultValue="m"><option value="m">Material</option></Combo><ComboCaret $s={5} $c="#555" /></ComboWrap>
        <Tool w={30} name="Apariencia"><IconWheel /></Tool>
        <ComboWrap><Combo aria-label="Aspecto" defaultValue="a"><option value="a">Aspecto</option></Combo><ComboCaret $s={5} $c="#555" /></ComboWrap>
        <Tool w={28} name="Ajustar aspecto"><IconWheelFilter /></Tool>
        <Tool w={32} name="Borrar aspecto"><IconWheelX /></Tool>
        <Tool w={30} name="Parámetros"><IconFx /></Tool>
        <Tool w={30} name="Añadir"><IconPlus /></Tool>
        <Tool w={20} name="Personalizar"><IconMenuDown /></Tool>
        <Title><span>Autodesk Inventor Professional 2019</span><span>Árbol</span></Title>
        <Tool w={18} name="Expandir"><Svg w={6} h={10}><path d="M0 0v10l6-5Z" fill="#ddd" /></Svg></Tool>
        <HelpSearch aria-label="Buscar en la ayuda" placeholder="Buscar en la ayuda y los comandos" />
        <Tool w={28} name="Usuario"><IconUser /></Tool>
        <UserName>Lenin230895</UserName>
        <Drop w={16} />
        <Tool w={36} name="Tienda"><IconCart /></Tool>
        <Rule $gap={4} />
        <Tool w={34} name="Ayuda"><IconHelp /></Tool><Drop w={14} />
        <WindowButtons>
          <Tool w={30} name="Minimizar"><IconMin /></Tool>
          <Tool w={30} name="Restaurar"><IconRestore /></Tool>
          <Tool w={30} name="Cerrar"><IconClose /></Tool>
        </WindowButtons>
      </TitleBar>

      <Tabs>
        {tabs.map(([t, w], i) => <Tab key={t} $w={w} $file={i === 0} $active={i === 1}>{t}</Tab>)}
        <RibbonToggle aria-label="Cinta"><Svg w={17} h={10}><rect width="17" height="10" rx="2" fill="#e8e8e8" /><path d="m5 7 3.500-4L12 7Z" fill="#333" /></Svg><Caret $c="#e8e8e8" /></RibbonToggle>
      </Tabs>

      <Ribbon>
        <Group $w={129}>
          <GroupBody $pad={7}>
            <BigButton $w={62}><IconInsert />Insertar<Caret /></BigButton>
            <BigButton $w={62}><IconCreate />Crear</BigButton>
          </GroupBody>
          <Label menu>Componente</Label>
        </Group>
        <Group $w={187}>
          <GroupBody $pad={7}>
            <Stack><SmallButton><IconMove />Desplazamiento libre</SmallButton><SmallButton><IconRotate />Rotación libre</SmallButton></Stack>
          </GroupBody>
          <Label menu>Posición</Label>
        </Group>
        <Group $w={379}>
          <GroupBody>
            <BigButton $w={50}><IconJoint />Unión</BigButton>
            <BigButton $w={70}><IconConstrain />Restringir</BigButton>
            <Stack $pad={4}><SmallButton><IconRel bulb="on" />Mostrar</SmallButton><SmallButton disabled><IconRel bulb="off" />Mostrar componentes no válidos</SmallButton><SmallButton><IconRel bulb="blue" />Ocultar todo</SmallButton></Stack>
          </GroupBody>
          <Label menu>Relaciones</Label>
        </Group>
        <Group $w={99}>
          <GroupBody $pad={7}>
            <Stack><SmallButton><IconPattern />Patrón</SmallButton><SmallButton><IconMirror />Simetría</SmallButton><SmallButton><IconMirror copy />Copiar</SmallButton></Stack>
          </GroupBody>
          <Label menu>Patrón</Label>
        </Group>
        <Group $w={163}>
          <GroupBody>
            <BigButton $w={80}><IconBom />{"Lista de\nmateriales"}</BigButton>
            <BigButton $w={78}><IconFx s={40} c="#3d4048" />Parámetros</BigButton>
          </GroupBody>
          <Label menu>Administrar</Label>
        </Group>
        <Group $w={135}>
          <GroupBody $pad={10}>
            <BigButton $w={114}><IconDerive />{"Crear sustitutos\nderivados"}</BigButton>
            <SplitButton><Caret /></SplitButton>
          </GroupBody>
          <Label>Productividad</Label>
        </Group>
        <Group $w={170}>
          <GroupBody $pad={3}>
            <BigButton $w={70}><IconPlane />Plano<Caret /></BigButton>
            <Stack $pad={1}><SmallButton><IconAxis />Eje<Caret /></SmallButton><SmallButton><IconPoint />Punto<Caret /></SmallButton><SmallButton><IconUcs />SCU</SmallButton></Stack>
          </GroupBody>
          <Label>Operaciones de trabajo</Label>
        </Group>
        <Group $w={335}>
          <GroupBody>
            <BigButton $w={158}><IconShrink />Contorno simplificado</BigButton>
            <BigButton $w={172}><IconShrink swap />{"Sustituto\nde contorno simplificado"}</BigButton>
          </GroupBody>
          <Label menu>Simplificación</Label>
        </Group>
        <PanelMenu aria-label="Paneles"><Svg><circle cx="10" cy="10" r="8.500" fill="#e9e9e9" stroke="#555" strokeWidth="1.500" /><path d="M5 7h10l-5 7Z" fill="#333c4a" /></Svg><Caret /></PanelMenu>
      </Ribbon>

      <Main>
        <Browser>
          <BrowserTabs>
            <BrowserTab>Modelo<IconClose s={9} c="#555" /></BrowserTab>
            <IconButton aria-label="Añadir panel"><Svg w={9}><path d="M4.500 0v9M0 4.500h9" stroke="#eee" strokeWidth="2" /></Svg></IconButton>
            <IconButton $push aria-label="Buscar"><Svg w={13}><circle cx="5.500" cy="5.500" r="4.500" stroke="#ddd" strokeWidth="1.300" /><path d="m9 9 4 4" stroke="#ddd" strokeWidth="1.300" /></Svg></IconButton>
            <IconButton aria-label="Menú"><Svg w={13} h={11}><path d="M0 1h13M0 5.500h13M0 10h13" stroke="#ddd" strokeWidth="1.300" /></Svg></IconButton>
          </BrowserTabs>
          <Modes><Mode $active>Ensamblaje</Mode><Mode>Modelado</Mode></Modes>
          <TreeArea>
            <Tree>
              <RootRow><IconAssembly />Árbol.iam</RootRow>
              {parts.map((p, i) => (
                <Row key={p}>
                  <Expander aria-label={`Expandir ${p}`}><Svg w={8} h={12}><path d="m1 1.500 5 4.500-5 4.500" stroke="#9a9a9a" strokeWidth="2.200" /></Svg></Expander>
                  <Dash />
                  {i < 3 ? <IconFolder rep={i === 1} /> : <IconPart />}
                  <RowText>{p}</RowText>
                </Row>
              ))}
            </Tree>
            <ScrollBar>
              <ScrollArrow aria-label="Subir"><Svg w={10} h={6}><path d="m1 5 4-4 4 4" stroke="#999" strokeWidth="1.600" /></Svg></ScrollArrow>
              <ScrollThumb />
              <ScrollArrow aria-label="Bajar"><Svg w={10} h={6}><path d="m1 1 4 4 4-4" stroke="#999" strokeWidth="1.600" /></Svg></ScrollArrow>
            </ScrollBar>
          </TreeArea>
        </Browser>

        <Work>
          <Canvas>
            <TreeModel />
            <DocButtons $top={6} $right={1}>
              <Svg w={12} h={12}><path d="M0 6h12v3H0Z" fill="#e8e8e8" /></Svg>
              <Svg w={11} h={11}><path d="M3 3V1h7v7H8M1 3h7v7H1Z" stroke="#e8e8e8" strokeWidth="1.600" /></Svg>
              <IconClose s={10} c="#eee" w={3.500} />
            </DocButtons>
            <Overlay $top={31} $right={84}><Svg w={15} h={15}><path d="M7.500 0 0 7.500h2.500V14H6V9h3v5h3.500V7.500H15Z" fill="#9d9d9d" /></Svg></Overlay>
            <Overlay $top={53} $right={33}>
              <Svg w={56} h={64}>
                <path d="M2 1h51l2 49H1Z" fill="#cdcdcd" /><path d="M1 50h54l-5 12H6Z" fill="#b4b4b4" /><path d="M12 10h33v31H12Z" fill="#a9b1bd" />
                <path d="M44 9h9l1 31h-9V33h-1Z" fill="#a9cbe8" stroke="#0d62c9" strokeWidth="1.200" /><path d="M2 1h51M1 50h54M6 62h44" stroke="#6e6e6e" strokeDasharray="12 3" />
                <text x="6" y="30" fontSize="10" fontWeight="700" fontFamily="Open Sans, sans-serif" fill="#4a5260">DERECHA</text>
                <path d="M22 54h9M24 57v3h6v-3M27 53v7M22 60h9" stroke="#4a4a4a" />
              </Svg>
            </Overlay>
            <Overlay $top={112} $right={8}><Svg w={12} h={9}><path d="M0 1h12" stroke="#9d9d9d" strokeWidth="1.500" /><path d="M1 4h10L6 9Z" fill="#9d9d9d" /></Svg></Overlay>
            <NavBar>
              <NavButton $h={14} $corner aria-label="Cerrar barra"><Svg w={9}><circle cx="4.500" cy="4.500" r="4.500" fill="#444" /><path d="m2.500 2.500 4 4m0-4-4 4" stroke="#ddd" /></Svg></NavButton>
              <NavButton $h={47} $line aria-label="Rueda"><Svg w={22}><path d="M11 1h10v10A10 10 0 1 1 11 1Z" fill="#e2e2e2" stroke="#444b58" strokeWidth="1.300" /><circle cx="11" cy="11" r="5.500" fill="#d2d4d8" stroke="#555" /><path d="m7 15-3 3M15 15l3 3" stroke="#555" /></Svg><Caret $s={2} /></NavButton>
              <NavButton $h={35} aria-label="Encuadre"><Svg w={22} h={23}><path d="M6 22C4 17 1 15 1 12c1-2 4 0 5 2L4 4c0-2 2-2 3 0l2 6V2c0-2 3-2 3 0v8l2-7c1-2 3-1 3 1l-1 8 3-5c1-1 3 0 2 2-2 5-3 10-6 13Z" fill="#f2f2f2" stroke="#444b58" strokeWidth="1.200" /></Svg></NavButton>
              <NavButton $h={42} $on aria-label="Zoom"><Svg w={24} h={24}><path d="M6 1v10M1 6h10M1 15h10" stroke="#555c68" strokeWidth="3" /><circle cx="17" cy="16" r="5" fill="#f4f4f4" stroke="#444b58" strokeWidth="1.300" /><path d="m20 19 4 5" stroke="#444" strokeWidth="2.500" /></Svg><Caret $s={2} /></NavButton>
              <NavButton $h={42} aria-label="Órbita"><Svg w={24}><ellipse cx="12" cy="12" rx="10.500" ry="4" stroke="#444b58" strokeWidth="1.500" /><ellipse cx="12" cy="12" rx="4" ry="10.500" stroke="#444b58" strokeWidth="1.500" /><path d="M11 10v5M8.500 12.500h5M15 3v5M12.500 5.500h5M19 7v5M16.500 9.500h5" stroke="#333" strokeWidth="1.200" /></Svg><Caret $s={2} /></NavButton>
              <NavButton $h={32} aria-label="Mirar a"><Svg w={23} h={22}><path d="M1 7h21v14H1Z" fill="#ddd" stroke="#444b58" strokeWidth="1.300" /><path d="M5 11h13v7H5Z" fill="#b9bcc2" stroke="#444b58" strokeWidth="1.300" /><path d="m3 6 6-5v5l6-4v4" fill="#ddd" stroke="#444b58" /></Svg></NavButton>
              <NavButton $h={14} $corner aria-label="Personalizar barra"><Svg w={9}><circle cx="4.500" cy="4.500" r="4.500" fill="#444" /><path d="M2 3.500h5M3 5.500h3" stroke="#ddd" /></Svg></NavButton>
            </NavBar>
            <AxisMark>
              <Svg w={50} h={52}>
                <path d="M16 45h27" stroke="#10108c" strokeWidth="1.500" /><path d="m13 45 9-5v10Z" fill="#0a0a96" /><path d="M42 45V15" stroke="#0c8c0c" strokeWidth="1.500" /><path d="m42 17 6 10H36Z" fill="#0a960a" /><ellipse cx="42" cy="38" rx="5.500" ry="6" fill="#b80000" />
                <path d="m39 4 3 4 3-4M42 8v5" stroke="#2ec02e" strokeWidth="1.300" /><path d="M3 41h6l-6 8h6" stroke="#1414c8" strokeWidth="1.300" /><path d="m39 28 6 8m0-8-6 8" stroke="#d41414" />
              </Svg>
            </AxisMark>
          </Canvas>
          <DocBar>
            <LayoutButton aria-label="Cascada"><Svg w={20}><path d="M5 11H1V1h13v4M9 15H5V6h11v3M8 10h11v9H8Z" stroke="#c4c4c4" strokeWidth="1.500" /><path d="M1 2h13M5 7h11M8 11h11" stroke="#c4c4c4" strokeWidth="2" /></Svg></LayoutButton>
            <LayoutButton aria-label="Mosaico"><Svg w={20}><path d="M1 1h7v7H1ZM12 1h7v7h-7ZM1 12h7v7H1ZM12 12h7v7h-7Z" stroke="#c4c4c4" strokeWidth="1.600" /></Svg></LayoutButton>
            <LayoutButton aria-label="Horizontal"><Svg w={20}><path d="M1 1h18v7H1ZM1 12h18v7H1Z" stroke="#c4c4c4" strokeWidth="1.600" /></Svg></LayoutButton>
            <LayoutButton aria-label="Vertical"><Svg w={20}><path d="M1 1h7v18H1ZM12 1h7v18h-7Z" stroke="#c4c4c4" strokeWidth="1.600" /></Svg></LayoutButton>
            <LayoutButton aria-label="Lista"><Svg w={12} h={11}><path d="M0 11 6 0l6 11Z" fill="#d0d0d0" /></Svg></LayoutButton>
            <DocTab $w={150}>Mi página de inic...</DocTab>
            <DocTab $w={109} $active>Árbol.iam<IconClose s={10} c="#555" w={3.500} /></DocTab>
          </DocBar>
        </Work>
      </Main>

      <StatusBar><StatusText>Listo</StatusText><StatusCell>62</StatusCell><StatusCell>25</StatusCell></StatusBar>

      <TaskBar>
        <TaskButton $w={60} aria-label="Inicio"><Svg w={20}><path d="M0 3 8.500 1.800v7.700H0ZM9.500 1.600 20 0v9.500H9.500ZM0 10.500h8.500v7.700L0 17ZM9.500 10.500H20V20L9.500 18.400Z" fill="#000" /></Svg></TaskButton>
        <TaskSearch><Svg w={21}><circle cx="13" cy="8" r="6.500" stroke="#222" strokeWidth="1.500" /><path d="m8.500 12.500-7.500 7.500" stroke="#222" strokeWidth="1.500" /></Svg><TaskInput aria-label="Buscar" placeholder="Type here to search" /></TaskSearch>
        <TaskButton $w={48} $after={12} aria-label="Cortana"><Svg w={20}><circle cx="10" cy="10" r="8.300" stroke="#000" strokeWidth="2.600" /></Svg></TaskButton>
        <TaskButton $w={48} $after={14} aria-label="Vista de tareas"><Svg w={20}><path d="M1 0v3h12V0M1 20v-3h12v3M1 6.500h12v7H1ZM18 0v5M18 11v9" stroke="#111" strokeWidth="1.500" /><path d="M16.500 6h3v3h-3Z" fill="#111" /></Svg></TaskButton>
        <TaskButton $w={48} $after={15} aria-label="Edge"><Svg w={26} h={28} vb="0 0 26 28"><path d="M1 13C2 5 7 0 14 0c8 0 12 6 12 12v4H9c0 5 4 7 8 7 3 0 6-1 8-2v5c-3 1-6 2-9 2C8 28 3 24 3 17c0-4 3-8 7-9-1 1-2 3-2 4h10c0-4-2-6-6-6C7 6 3 9 1 13Z" fill="#0f7ad8" /></Svg></TaskButton>
        <TaskButton $w={51} $after={12} $open aria-label="Explorador"><Svg w={28} h={24}><path d="M0 1h12l2 3h13v19H0Z" fill="#fdd067" /><path d="M0 1h12v3H0Z" fill="#e0a012" /><path d="M5 24V14q0-1 1-1h17q1 0 1 1v10h-5v-6h-9v6Z" fill="#3b97de" /></Svg></TaskButton>
        <TaskButton $w={48} $after={13} aria-label="Correo"><Svg w={30} h={24}><path d="M0 8 15 0l15 8v16H0Z" fill="#3a3f46" /><path d="M1 8h28l-10 5 5 7L1 8Z" fill="#dcebf2" /></Svg></TaskButton>
        <TaskButton $w={51} $after={6} $open aria-label="Firefox"><Svg w={30}><path d="M17 0c4 3 6 4 8 8 3 3 4 7 4 9a14 13 0 0 1-28 0C1 12 3 9 3 5l3 3c3-2 6-1 8-3 0-2 1-4 3-5Z" fill="url(#fox)" /><circle cx="15" cy="16" r="6.500" fill="#6a3fd0" /><path d="M5 10c4-1 6 0 8 2-3 1-4 2-5 4-2-2-3-3-3-6Z" fill="#ff9a2a" /></Svg></TaskButton>
        <TaskButton $w={61} $open $active aria-label="Inventor"><Svg w={30}><path d="M0 0h30v30H0Z" fill="#fbe6d3" stroke="#fff" /><path d="M4 20 30 9v21H0Z" fill="#f9d6b6" opacity=".6" /><path d="M9 2h11v4h-3v13h3v4H9v-4h3V6H9Z" fill="#c7782a" /><path d="M14.500 6v13" stroke="#8a4d12" strokeWidth="1.500" /><text x="15" y="28.500" fontSize="6" fontWeight="700" fontFamily="Open Sans, sans-serif" fill="#e58a2c">PRO</text></Svg></TaskButton>
        <Tray>
          <TrayItem aria-label="Mostrar ocultos"><Svg w={18} h={10}><path d="m1 9 8-8 8 8" stroke="#222" strokeWidth="1.600" /></Svg></TrayItem>
          <TrayItem aria-label="Batería"><Svg w={20} h={14}><path d="M6 3.500h12v8H5V8" stroke="#111" strokeWidth="1.300" /><path d="M8 5h7v5H7ZM18 5.500h2v4h-2Z" fill="#111" /><path d="M0 3h5v2q-2.500 4-5 0ZM1 0v3M4 0v3" stroke="#111" fill="#111" /></Svg></TrayItem>
          <TrayItem aria-label="Volumen"><Svg w={20} h={16}><path d="M1 5h2l4-4v14l-4-4H1Z" stroke="#111" strokeWidth="1.300" /><path d="M10 5q2 3 0 6M13 3q3 5 0 10" stroke="#111" strokeWidth="1.300" /><path d="M16 1q4 7 0 14" stroke="#999" /></Svg></TrayItem>
          <TrayItem aria-label="Red"><Svg w={17} h={16}><path d="M1 15C1 7 7 1 16 1M5 15C5 9 9 5 16 5M9 15c0-3 3-6 7-6" stroke="#333" strokeWidth="1.300" /><circle cx="14" cy="14" r="1.800" fill="#111" /></Svg></TrayItem>
          <TrayItem aria-label="Nube"><Svg w={20} h={13}><path d="M5 13a4.500 4.500 0 0 1-.5-8.500 6 6 0 0 1 11-.5A4.500 4.500 0 0 1 15.500 13Z" fill="#fff" /><path d="M10 11V6M7.500 7.500 10 5l2.500 2.500" stroke="#c9d3e2" strokeWidth="2" /></Svg></TrayItem>
          <TrayItem $w={42}>ESP</TrayItem>
          <Clock>11:46 PM<br />11/20/2019</Clock>
          <Notice aria-label="Notificaciones"><Svg w={21} h={20}><path d="M0 0h20v16h-5v4l-4-4H0Z" fill="#000" /><path d="M4 4.500h12M4 8h12M4 11.500h8" stroke="#fff" strokeWidth="1.300" /></Svg><Badge>5</Badge></Notice>
          <ShowDesktop />
        </Tray>
      </TaskBar>
    </Window>
  );
}
